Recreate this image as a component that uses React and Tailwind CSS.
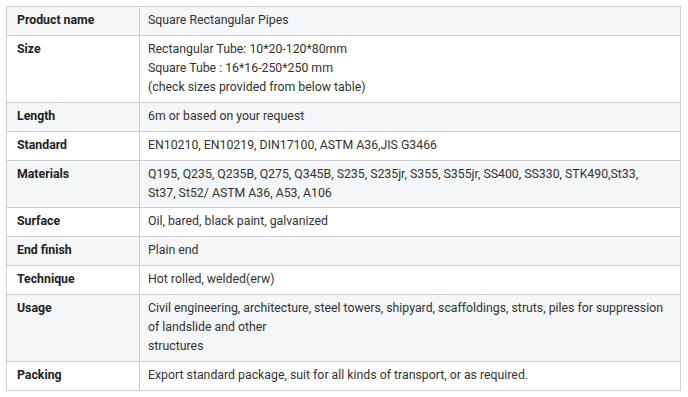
const rows = [
  ['Product name', ['Square Rectangular Pipes']],
  ['Size', ['Rectangular Tube: 10*20-120*80mm', 'Square Tube : 16*16-250*250 mm', '(check sizes provided from below table)']],
  ['Length', ['6m or based on your request']],
  ['Standard', ['EN10210, EN10219, DIN17100, ASTM A36,JIS G3466']],
  ['Materials', ['Q195, Q235, Q235B, Q275, Q345B, S235, S235jr, S355, S355jr, SS400, SS330, STK490,St33,', 'St37, St52/ ASTM A36, A53, A106']],
  ['Surface', ['Oil, bared, black paint, galvanized']],
  ['End finish', ['Plain end']],
  ['Technique', ['Hot rolled, welded(erw)']],
  ['Usage', ['Civil engineering, architecture, steel towers, shipyard, scaffoldings, struts, piles for suppression', 'of landslide and other', 'structures']],
  ['Packing', ['Export standard package, suit for all kinds of transport, or as required.']],
]

export default function App() {
  return (
    <div className="w-[688px] h-[397px] bg-white pt-[6px] pl-[6px] font-['Roboto',sans-serif] text-[12.3px] leading-[19px] text-[#333]">
      <table className="w-[675px] border-collapse">
        <tbody>
          {rows.map(([label, lines], i) => (
            <tr key={label} className={i % 2 === 0 ? 'bg-[#f5f6f8]' : 'bg-white'}>
              <td className="w-[133px] border border-[#cfcfcf] align-top pl-[10px] pr-1 pt-[4px] pb-[4.9px] font-bold text-[#222]">
                {label}
              </td>
              <td className="border border-[#cfcfcf] align-top pl-[8px] pr-1 pt-[4px] pb-[4.9px] whitespace-nowrap">
                {lines.map((l, j) => (
                  <div key={j}>{l}</div>
                ))}
              </td>
            </tr>
          ))}
        </tbody>
      </table>
    </div>
  )
}
